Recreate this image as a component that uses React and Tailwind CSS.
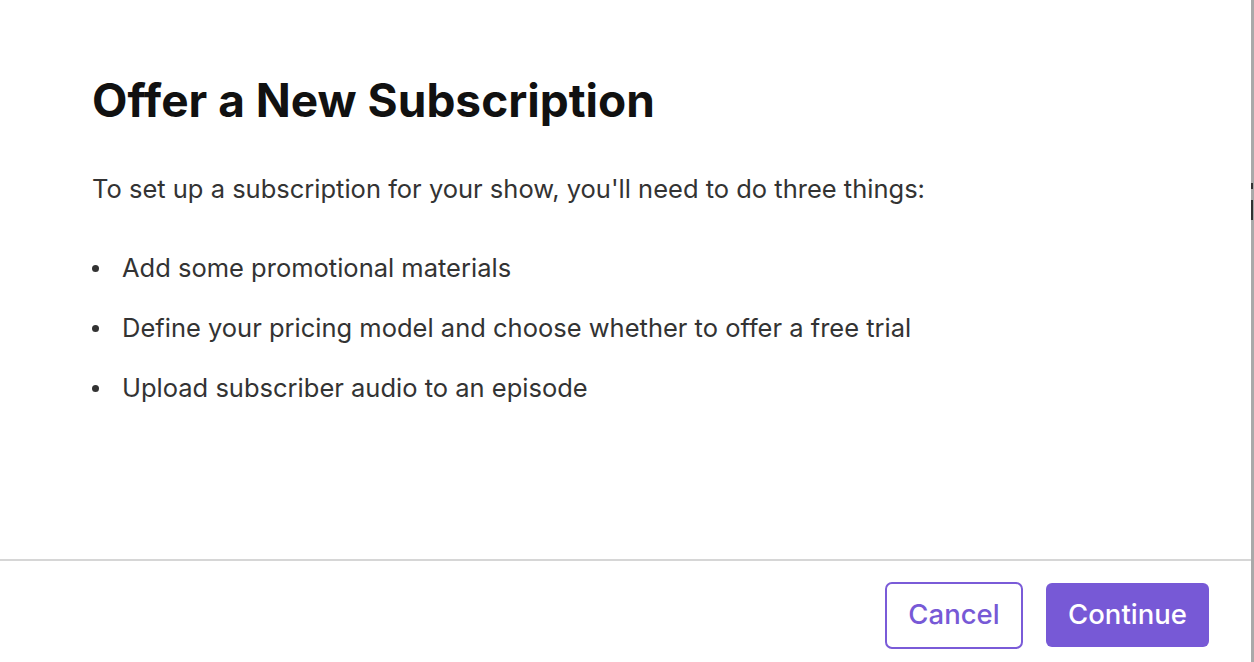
import React from 'react';

const steps = [
  'Add some promotional materials',
  'Define your pricing model and choose whether to offer a free trial',
  'Upload subscriber audio to an episode',
];

export default function App() {
  return (
    <div className="w-[1254px] h-[662px] flex bg-white overflow-hidden" style={{ fontFamily: 'Inter, "Noto Sans", sans-serif' }}>
      <div className="w-[1251px] h-full flex flex-col bg-white">
        <div className="flex-1 px-[92px] pt-[72px]">
          <h1 className="text-[46px] leading-[56px] font-bold text-[#111111]">
            Offer a New Subscription
          </h1>
          <p className="mt-[45px] text-[25.5px] leading-[32px] text-[#333333]">
            To set up a subscription for your show, you'll need to do three things:
          </p>
          <ul className="mt-[47px] flex flex-col gap-[28px]">
            {steps.map((s) => (
              <li key={s} className="flex items-center text-[25.5px] leading-[32px] text-[#333333]">
                <span className="w-[7px] h-[7px] rounded-full bg-[#333333] mr-[23px]" />
                {s}
              </li>
            ))}
          </ul>
        </div>
        <div className="h-[103px] border-t-2 border-[#d6d6d6] flex items-center justify-end gap-[23px] pr-[42px] pt-[7px]">
          <button className="w-[138px] h-[67px] rounded-[7px] border-2 border-[#7a5bd8] text-[#7759d6] text-[27.5px] font-medium bg-white">
            Cancel
          </button>
          <button className="w-[163px] h-[64px] rounded-[6px] bg-[#7759d6] text-white text-[27.5px] font-medium">
            Continue
          </button>
        </div>
      </div>
      <div className="w-[3px] h-full bg-[#a9a9a9] relative">
        <span className="absolute left-0 top-[183px] w-[2px] h-[6px] bg-[#333333]" />
        <span className="absolute left-0 top-[200px] w-[2px] h-[20px] bg-[#333333]" />
      </div>
    </div>
  );
}
